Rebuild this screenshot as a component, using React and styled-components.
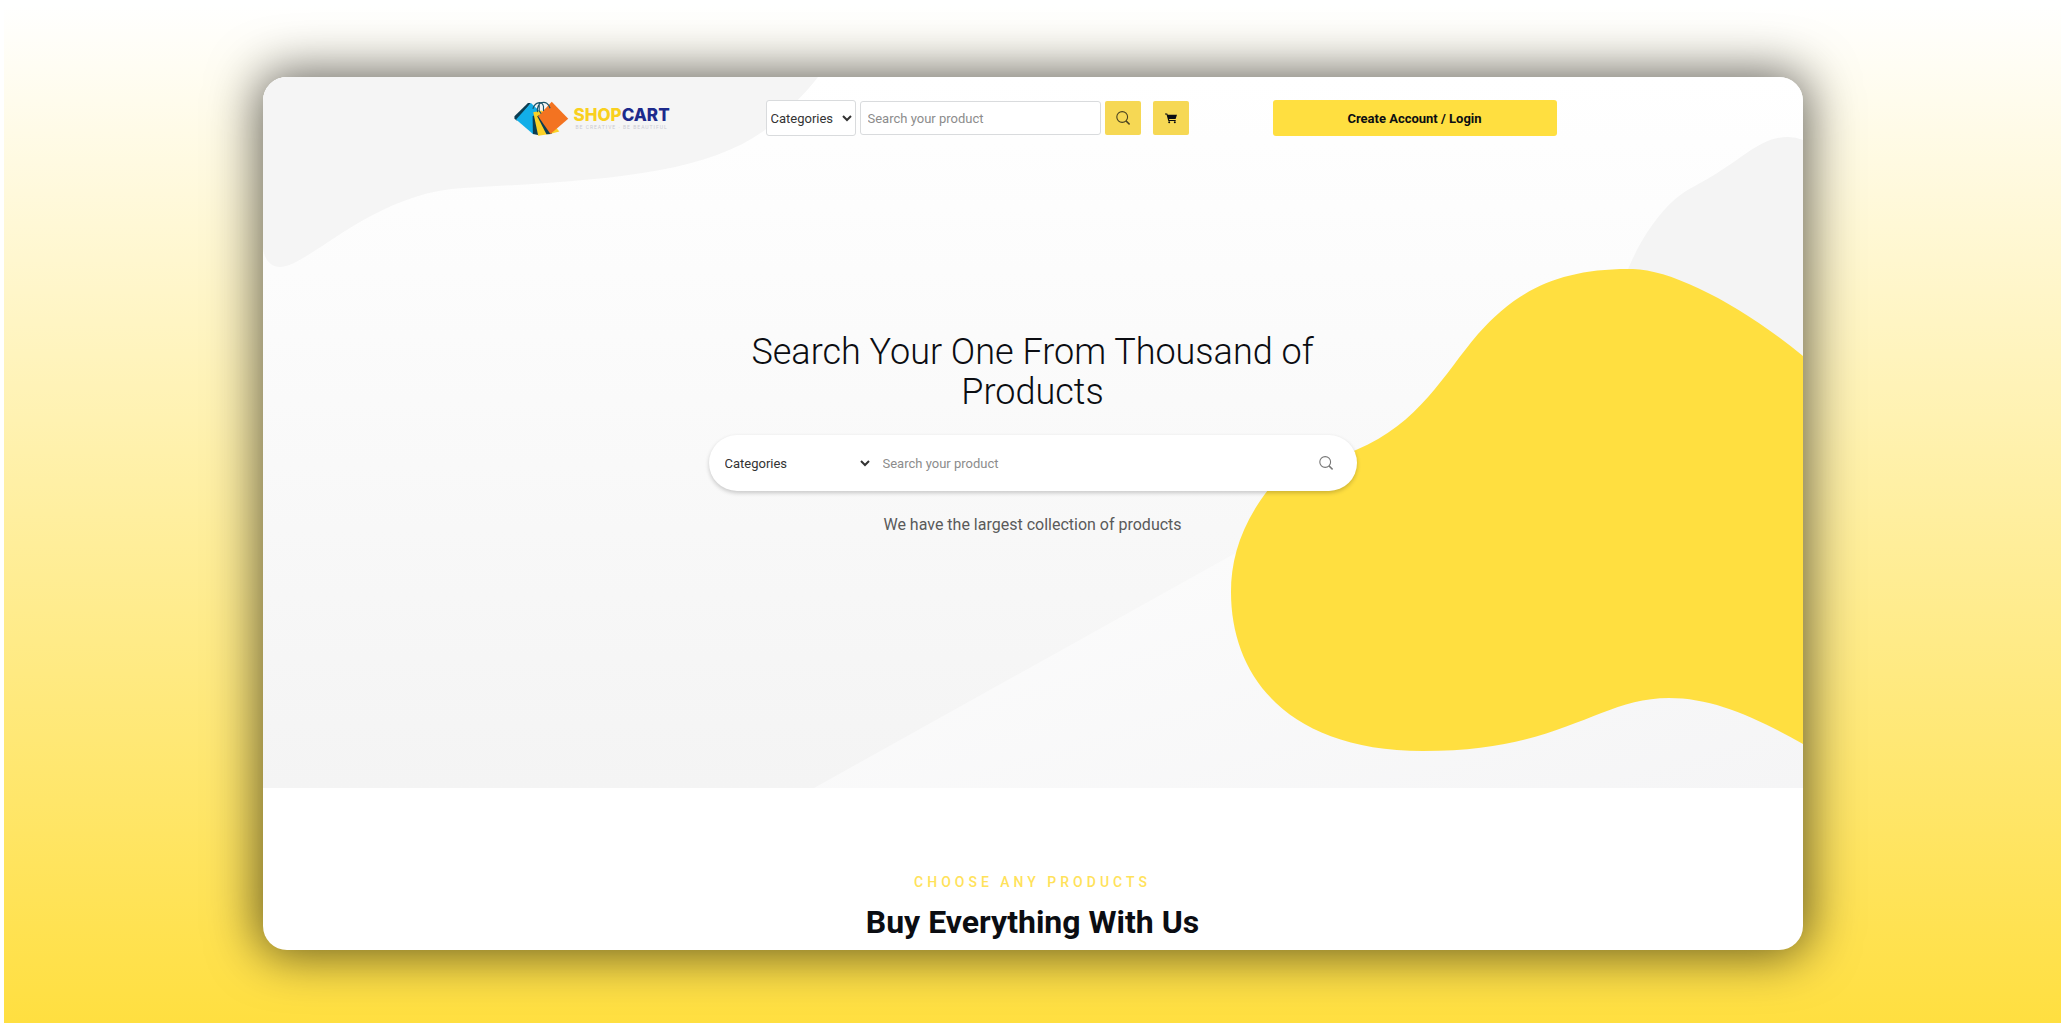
import React from "react";
import styled, { createGlobalStyle } from "styled-components";

const yellow = "#ffdf40";
const ink = "#0b0d12";

const GlobalStyle = createGlobalStyle`
  *, *::before, *::after { box-sizing: border-box; }
  body {
    margin: 4px;
    background: #fff;
    color: ${ink};
    font-family: Roboto, "Liberation Sans", sans-serif;
  }
  button, input, select { font: inherit; }
  h1, h2, p { margin: 0; }
`;

const Backdrop = styled.div`
  display: flex;
  justify-content: center;
  min-height: calc(100vh - 8px);
  padding: 73px 24px;
  background: linear-gradient(#fff, ${yellow});
  box-shadow: 0 0 4px rgba(0, 0, 0, 0.3);
`;

const Card = styled.div`
  width: 100%;
  max-width: 1540px;
  overflow: hidden;
  border-radius: 24px;
  background: #fff;
  box-shadow: 0 0 50px 5px rgba(0, 0, 0, 0.6);
`;

const Hero = styled.div`
  position: relative;
  padding: 23px 24px 252px;
  background: linear-gradient(#fff, #f4f4f4);
`;

const Shapes = styled.svg`
  position: absolute;
  inset: 0;
  width: 100%;
  height: 100%;
`;

const Header = styled.header`
  position: relative;
  display: grid;
  grid-template-columns: 168fr 423fr 284fr;
  column-gap: 84px;
  align-items: center;
  max-width: 1048px;
  margin: 0 auto;
  padding-left: 5px;
`;

const Logo = styled.a`
  display: flex;
  align-items: center;
  gap: 5px;
  text-decoration: none;
`;

const LogoWords = styled.span`
  display: flex;
  flex-direction: column;
  align-items: center;
`;

const LogoName = styled.span`
  color: ${(p) => p.$color || "#f9d01e"};
  font: 800 17px/18px Inter, "Liberation Sans", sans-serif;
`;

const Tagline = styled.span`
  color: #cacad2;
  font-size: 5px;
  line-height: 6px;
  letter-spacing: 1px;
  white-space: nowrap;
`;

const Toolbar = styled.form`
  display: flex;
  align-items: center;
  gap: 4px;
`;

const Select = styled.select`
  color: #333;
  font-size: 13px;
  background: #fff;
`;

const BoxedSelect = styled(Select)`
  width: 90px;
  height: 36px;
  border: 1px solid #d9dbdd;
  border-radius: 3px;
`;

const Field = styled.input`
  flex: 1;
  min-width: 0;
  border: 0;
  background: #fff;
  color: #333;
  font-size: 13px;
  &::placeholder { color: #8c8c8c; opacity: 1; }
`;

const BoxedField = styled(Field)`
  height: 34px;
  padding: 0 7px;
  border: 1px solid #d9dbdd;
  border-radius: 3px;
`;

const IconButton = styled.button`
  display: grid;
  place-items: center;
  width: 36px;
  height: 34px;
  padding: 0;
  border: 0;
  border-radius: 2px;
  background: #f6d854;
  color: ${(p) => p.$color || ink};
  & + & { margin-left: 8px; }
`;

const LoginButton = styled.button`
  height: 36px;
  border: 0;
  border-radius: 3px;
  background: ${yellow};
  color: ${ink};
  font-size: 13px;
  font-weight: 700;
`;

const Intro = styled.main`
  position: relative;
  display: flex;
  flex-direction: column;
  gap: 23px;
  max-width: 648px;
  margin: 196px auto 0;
  text-align: center;
`;

const Title = styled.h1`
  font-size: 36px;
  font-weight: 300;
  line-height: 40px;
`;

const SearchBar = styled.form`
  display: flex;
  align-items: center;
  height: 56px;
  padding: 0 24px 0 12px;
  border-radius: 28px;
  background: #fff;
  box-shadow: 0 2px 4px rgba(0, 0, 0, 0.2);
`;

const BareSelect = styled(Select)`
  width: 152px;
  border: 0;
`;

const BareField = styled(Field)`
  padding: 0 10px;
`;

const BareButton = styled.button`
  display: grid;
  place-items: center;
  padding: 0;
  border: 0;
  background: none;
  color: #777;
`;

const Lead = styled.p`
  color: #5a5a5a;
  font-size: 16px;
  line-height: 22px;
`;

const Products = styled.section`
  padding: 84px 24px 8px;
  text-align: center;
`;

const Eyebrow = styled.p`
  margin-bottom: 10px;
  color: #ffe25a;
  font-size: 14px;
  font-weight: 500;
  line-height: 20px;
  letter-spacing: 4px;
`;

const SectionTitle = styled.h2`
  font-size: 32px;
  font-weight: 700;
  line-height: 40px;
`;

function BagsMark() {
  return (
    <svg width="55" height="35" viewBox="42 46 164 106" aria-hidden="true">
      <path fill="#0b3d52" d="M42 92 83 52h9L50 106l-8-6z" />
      <path fill="#12aee8" d="M47 102 92 52l27 26-20 69z" />
      <path fill="#0b3d52" d="m97 92 10-6 10 64-19-4z" />
      <path fill="#fbd126" d="m99 80 26-5 53 63-28 8-36 5z" />
      <path fill="#0b3d52" d="m111 92 8-4 36 58-16 1z" />
      <path fill="#f37321" d="m114 92 41-44 50 52-54 46z" />
      <path
        fill="none"
        stroke="#1c566b"
        strokeWidth="3.5"
        d="M98 70c5-20 27-26 32-8v14M112 80c-6-32 30-42 38-12M117 52v24l6 8"
      />
    </svg>
  );
}

function SearchIcon() {
  return (
    <svg width="14" height="14" viewBox="0 0 14 14" fill="none" stroke="currentColor" aria-hidden="true">
      <circle cx="6.2" cy="6" r="5.4" strokeWidth="1.1" />
      <path strokeWidth="1.5" d="m10 9.9 3.6 3.5" />
    </svg>
  );
}

function CartIcon() {
  return (
    <svg width="12" height="11" viewBox="0 0 12 11" fill="currentColor" aria-hidden="true">
      <path d="M0 .5h2.2l.5 1.2H12L10.6 6H4l.3 1h6.4v1H3.3L1.5 1.4H0z" />
      <circle cx="4.2" cy="9.2" r="1" />
      <circle cx="9.8" cy="9.2" r="1" />
    </svg>
  );
}

function HeroShapes() {
  return (
    <Shapes viewBox="0 0 1540 711" preserveAspectRatio="none" aria-hidden="true">
      <defs>
        <linearGradient id="slope" x1="0" y1="0" x2="1" y2="1">
          <stop offset="0.2" stopColor="#fcfcfc" />
          <stop offset="1" stopColor="#f5f5f6" />
        </linearGradient>
      </defs>
      <path fill="url(#slope)" d="M551 711 1100 405H1540V711z" />
      <path
        fill="#f5f5f5"
        d="M0 0H555C540 20 515 42 502 53 440 98 340 103 201 111 110 115 45 190 17 190 6 190 0 180 0 168z"
      />
      <path
        fill="#f4f4f4"
        d="M1362 200C1375 165 1400 125 1430 110 1480 84 1495 60 1525 60Q1533 60 1540 63V300H1362z"
      />
      <path
        fill={yellow}
        d="M1540 279C1478 228 1410 193 1370 192 1297 191 1254 213 1215 257 1180 298 1157 346 1093 373 1050 393 1022 388 1005 413 978 448 968 482 968 515 968 600 1025 674 1160 674 1300 674 1335 621 1406 621 1450 621 1492 640 1540 667z"
      />
    </Shapes>
  );
}

export default function App() {
  return (
    <>
      <GlobalStyle />
      <Backdrop>
        <Card>
          <Hero>
            <HeroShapes />
            <Header>
              <Logo href="#">
                <BagsMark />
                <LogoWords>
                  <LogoName>
                    SHOP<LogoName $color="#1d2a8c">CART</LogoName>
                  </LogoName>
                  <Tagline>BE CREATIVE · BE BEAUTIFUL</Tagline>
                </LogoWords>
              </Logo>
              <Toolbar>
                <BoxedSelect aria-label="Product category">
                  <option>Categories</option>
                </BoxedSelect>
                <BoxedField type="text" aria-label="Search" placeholder="Search your product" />
                <IconButton type="button" aria-label="Search" $color="#4a4320">
                  <SearchIcon />
                </IconButton>
                <IconButton type="button" aria-label="Cart">
                  <CartIcon />
                </IconButton>
              </Toolbar>
              <LoginButton type="button">Create Account / Login</LoginButton>
            </Header>
            <Intro>
              <Title>Search Your One From Thousand of Products</Title>
              <SearchBar>
                <BareSelect aria-label="Product category">
                  <option>Categories</option>
                </BareSelect>
                <BareField type="text" aria-label="Search" placeholder="Search your product" />
                <BareButton type="button" aria-label="Search">
                  <SearchIcon />
                </BareButton>
              </SearchBar>
              <Lead>We have the largest collection of products</Lead>
            </Intro>
          </Hero>
          <Products>
            <Eyebrow>CHOOSE ANY PRODUCTS</Eyebrow>
            <SectionTitle>Buy Everything With Us</SectionTitle>
          </Products>
        </Card>
      </Backdrop>
    </>
  );
}
